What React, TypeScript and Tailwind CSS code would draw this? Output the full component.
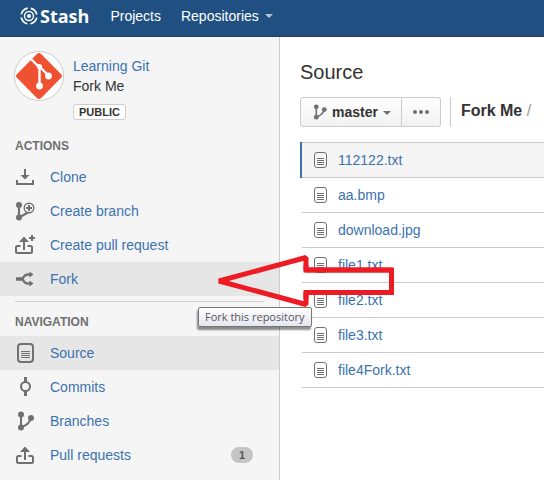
import type { ReactNode } from "react";

type IconProps = { className?: string };

const svgProps = {
  width: 20,
  height: 20,
  viewBox: "0 0 20 20",
  fill: "none",
  stroke: "currentColor",
  strokeWidth: 2,
  "aria-hidden": true,
} as const;

function CloneIcon() {
  return (
    <svg {...svgProps}>
      <path d="M2 13v4h16v-4M10 2v7" />
      <path d="M5.500 8h9L10 12.500z" fill="currentColor" stroke="none" />
    </svg>
  );
}

function CreateBranchIcon() {
  return (
    <svg {...svgProps}>
      <path d="M4 4v12M4 16.500l9-5" strokeWidth="2.200" />
      <circle cx="4" cy="4" r="3" fill="currentColor" stroke="none" />
      <circle cx="4" cy="16.500" r="3" fill="currentColor" stroke="none" />
      <circle cx="14" cy="7" r="4.800" strokeWidth="1.400" fill="#f5f5f5" />
      <path d="M14 4v6M11 7h6" strokeWidth="2" />
    </svg>
  );
}

function CreatePullIcon() {
  return (
    <svg {...svgProps} className="overflow-visible">
      <path d="M5.500 11H2.500Q1 11 1 12.500v4Q1 18 2.500 18h13q1.500 0 1.500-1.500v-4Q17 11 15.500 11H12.500M9 5v10" />
      <path d="M4 7h10L9 1.500z" fill="currentColor" stroke="none" />
      <path d="M17 0v6M14 3h6" />
    </svg>
  );
}

function ForkIcon() {
  return (
    <svg {...svgProps}>
      <path d="M1 10h7" strokeWidth="3.500" />
      <path d="M15 5.500h-2.500C9 5.500 9.500 8 7 10c2.500 2 2 4.500 5.500 4.500H15" strokeWidth="2.400" />
      <path d="M14.500 2.500v6L18.500 5.500zM14.500 11.500v6l4-3z" fill="currentColor" stroke="none" />
    </svg>
  );
}

function FileIcon() {
  return (
    <svg {...svgProps}>
      <rect x="3" y="1" width="15" height="18" rx="3" />
      <path d="M6 8.500h9M6 10.500h9M6 12.500h9M6 14.500h9" strokeWidth="1" />
    </svg>
  );
}

function CommitIcon() {
  return (
    <svg {...svgProps}>
      <path d="M10.500 0v5M10.500 14v5" strokeWidth="3" />
      <circle cx="10.500" cy="9.500" r="4.500" />
    </svg>
  );
}

function BranchIcon({ className }: IconProps) {
  return (
    <svg {...svgProps} className={className}>
      <path d="M6 4v12.500M6 16.500c5-2.500 9-4 10-10" />
      <circle cx="6" cy="3.500" r="3" fill="currentColor" stroke="none" />
      <circle cx="6" cy="16.500" r="3" fill="currentColor" stroke="none" />
      <circle cx="16" cy="7" r="3" fill="currentColor" stroke="none" />
    </svg>
  );
}

function PullIcon() {
  return (
    <svg {...svgProps}>
      <path d="M6.500 11H3.500Q2 11 2 12.500v4Q2 18 3.500 18h13q1.500 0 1.500-1.500v-4Q18 11 16.500 11H13.500M10 5v10" />
      <path d="M5 7h10l-5-5.500z" fill="currentColor" stroke="none" />
    </svg>
  );
}

function StashLogo() {
  return (
    <svg width="18" height="18" viewBox="0 0 18 18" fill="none" stroke="white" aria-hidden="true">
      <circle cx="9" cy="9" r="2" fill="white" stroke="none" />
      <circle cx="9" cy="9" r="4.500" strokeWidth="1.400" />
      <circle
        cx="9"
        cy="9"
        r="7.900"
        strokeWidth="1.700"
        strokeDasharray="9.400 3"
        strokeDashoffset="4.700"
        transform="rotate(-45 9 9)"
      />
    </svg>
  );
}

function GitAvatar() {
  return (
    <svg width="50" height="50" viewBox="0 0 50 50" className="shrink-0" aria-hidden="true">
      <circle cx="25" cy="25" r="24.500" fill="white" stroke="#ccc" />
      <rect x="8" y="8" width="34" height="34" rx="3" fill="#f05133" transform="rotate(45 25 25)" />
      <g stroke="white" strokeWidth="2.400" fill="white">
        <path d="M16 7L25.500 16.500V34M25.500 15.500l9 9" fill="none" />
        <circle cx="25.500" cy="15.500" r="2.600" stroke="none" />
        <circle cx="25.500" cy="35" r="3.400" stroke="none" />
        <circle cx="34.500" cy="25" r="3.400" stroke="none" />
      </g>
    </svg>
  );
}

type NavItem = { label: string; icon: ReactNode; active?: boolean; count?: number; tip?: string };

const actions: NavItem[] = [
  { label: "Clone", icon: <CloneIcon /> },
  { label: "Create branch", icon: <CreateBranchIcon /> },
  { label: "Create pull request", icon: <CreatePullIcon /> },
  { label: "Fork", icon: <ForkIcon />, active: true, tip: "Fork this repository" },
];

const navigation: NavItem[] = [
  { label: "Source", icon: <FileIcon />, active: true },
  { label: "Commits", icon: <CommitIcon /> },
  { label: "Branches", icon: <BranchIcon /> },
  { label: "Pull requests", icon: <PullIcon />, count: 1 },
];

const files = ["112122.txt", "aa.bmp", "download.jpg", "file1.txt", "file2.txt", "file3.txt", "file4Fork.txt"];

function NavList({ title, items }: { title: string; items: NavItem[] }) {
  return (
    <nav aria-label={title}>
      <h2 className="px-[15px] text-xs leading-7 font-bold text-[#707070] uppercase">{title}</h2>
      <ul>
        {items.map((item) => (
          <li key={item.label} className="relative">
            <a
              href="#"
              className={`flex h-[34px] items-center gap-[15px] pr-[26px] pl-[15px] text-[#3b73af] ${item.active ? "bg-[#e6e6e6]" : ""}`}
            >
              <span className="text-[#707070]">{item.icon}</span>
              <span className="grow">{item.label}</span>
              {item.count !== undefined && (
                <span className="rounded-full bg-[#c4c4c4] px-2 text-[11px] leading-4 font-bold text-[#555]">
                  {item.count}
                </span>
              )}
            </a>
            {item.tip && (
              <span
                role="tooltip"
                className="absolute top-[45px] left-[198px] z-10 rounded-xs border border-[#767676] bg-linear-to-b from-white to-[#e4e5f0] px-1.5 font-['Open_Sans',sans-serif] text-[11px] leading-[18px] whitespace-nowrap text-[#575757] shadow-[-1px_3px_2px_#00000070]"
              >
                {item.tip}
              </span>
            )}
          </li>
        ))}
      </ul>
    </nav>
  );
}

function Caret({ className }: IconProps) {
  return (
    <svg width="8" height="4" viewBox="0 0 8 4" className={className} aria-hidden="true">
      <path d="M0 0h8L4 4z" fill="currentColor" />
    </svg>
  );
}

export default function App() {
  return (
    <div className="relative flex min-h-screen flex-col overflow-hidden bg-white font-['Liberation_Sans',Arial,sans-serif] text-sm leading-5 text-[#333]">
      <header className="flex h-[37px] items-center border-b border-[#2e3d54] bg-[#205081] pb-1 pl-5 text-white">
        <a href="#" className="flex items-center gap-0.5 font-['Open_Sans',sans-serif] text-lg leading-6 font-bold">
          <StashLogo />
          Stash
        </a>
        <a href="#" className="ml-[21px]">Projects</a>
        <button type="button" className="ml-5 flex items-center gap-1.5">
          Repositories
          <Caret className="text-[#b5c5d6]" />
        </button>
      </header>

      <div className="flex grow">
        <aside className="w-[280px] shrink-0 border-r border-[#ccc] bg-[#f5f5f5]">
          <div className="flex gap-[9px] pt-3.5 pb-3 pl-3.5">
            <GitAvatar />
            <div className="pt-[5px]">
              <a href="#" className="block text-[#3b73af]">Learning Git</a>
              <p>Fork Me</p>
              <span className="mt-2 block w-fit rounded-[3px] border border-[#ccc] bg-white px-[5px] text-[11px] leading-[14px] font-bold">
                PUBLIC
              </span>
            </div>
          </div>
          <NavList title="Actions" items={actions} />
          <hr className="mx-[15px] mt-[5px] mb-1.5 border-[#ccc]" />
          <NavList title="Navigation" items={navigation} />
        </aside>

        <main className="min-w-0 grow pl-5">
          <h1 className="mt-[23px] text-xl leading-6">Source</h1>
          <div className="mt-[13px] flex h-[30px] items-stretch">
            <button
              type="button"
              className="flex items-center rounded-l-[3px] border border-[#ccc] bg-linear-to-b from-white to-[#f2f2f2] px-2.5 font-bold"
            >
              <BranchIcon className="mr-1 h-4 w-[17px] text-[#707070]" />
              master
              <Caret className="mt-0.5 ml-[5px] text-[#707070]" />
            </button>
            <button
              type="button"
              aria-label="More actions"
              className="flex items-center gap-0.5 rounded-r-[3px] border border-l-0 border-[#ccc] bg-linear-to-b from-white to-[#f2f2f2] px-[11px]"
            >
              <i className="size-1 rounded-full bg-[#707070]" />
              <i className="size-1 rounded-full bg-[#707070]" />
              <i className="size-1 rounded-full bg-[#707070]" />
            </button>
            <p className="ml-[9px] border-l border-[#ccc] pl-2.5 text-base leading-7 text-[#999]">
              <b className="text-[#333]">Fork Me</b> /
            </p>
          </div>
          <ul className="mt-[15px]">
            {files.map((file, i) => (
              <li key={file} className={i === 0 ? "border-l-2 border-[#3b73af] bg-[#f5f5f5]" : "pl-0.5"}>
                <a
                  href="#"
                  className={`flex items-center gap-2.5 border-b border-[#ccc] pl-3 text-[#3b73af] ${i === 0 ? "h-9 border-t" : "h-[35px]"}`}
                >
                  <svg width="14" height="16" viewBox="0 0 14 16" fill="none" stroke="#707070" aria-hidden="true">
                    <rect x="0.500" y="0.500" width="12" height="15" rx="2.500" />
                    <path d="M3 6.500h7M3 8.500h7M3 10.500h7M3 12.500h7" />
                  </svg>
                  {file}
                </a>
              </li>
            ))}
          </ul>
        </main>
      </div>

      <svg
        width="180"
        height="56"
        viewBox="0 0 180 56"
        fill="none"
        className="pointer-events-none absolute top-[253px] left-[216px]"
        aria-hidden="true"
      >
        <path d="M3 28L90 4.500V17H175.500V39.500H90V51.500Z" stroke="#ed1c24" strokeWidth="5" strokeLinejoin="bevel" />
        <path d="M90 12V17H175.500V39.500H90V46" stroke="#ed1c24" strokeWidth="5" />
      </svg>
    </div>
  );
}
